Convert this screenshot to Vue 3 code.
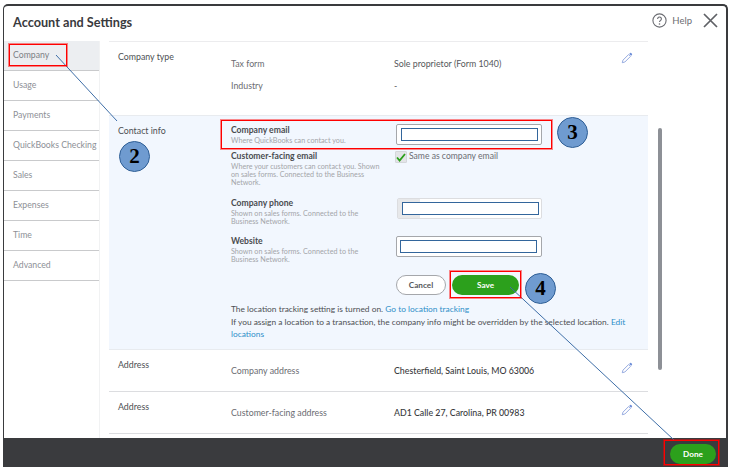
<script setup>
const tabs = ['Company','Usage','Payments','QuickBooks Checking','Sales','Expenses','Time','Advanced']
const addresses = [
  { label: 'Company address', value: 'Chesterfield, Saint Louis, MO 63006' },
  { label: 'Customer-facing address', value: 'AD1 Calle 27, Carolina, PR 00983' }
]
const pencil = 'M1.5 12.5l.8-3 6.6-6.6 2.2 2.2-6.6 6.6z'
const tip = 'M9.6 2.2l.9-.9a1 1 0 0 1 1.4 0l.8.8a1 1 0 0 1 0 1.4l-.9.9z'
</script>

<template>
  <div class="page">
    <div class="window">
      <header class="top">
        <h1>Account and Settings</h1>
        <div class="tools">
          <svg class="help-icon" width="15" height="15" viewBox="0 0 15 15"><circle cx="7.5" cy="7.5" r="6.6" fill="none" stroke="#6b6c72" stroke-width="1.1"/><path d="M5.6 5.9a1.9 1.9 0 1 1 2.9 1.6c-.7.4-1 .8-1 1.6" fill="none" stroke="#6b6c72" stroke-width="1.1"/><circle cx="7.5" cy="11" r=".8" fill="#6b6c72"/></svg>
          <span class="help">Help</span>
          <svg class="close" width="15" height="15" viewBox="0 0 15 15"><path d="M1 1l13 13M14 1L1 14" stroke="#5f6166" stroke-width="1.7" fill="none"/></svg>
        </div>
      </header>
      <div class="body">
        <nav class="side">
          <div v-for="(t, i) in tabs" :key="t" class="tab" :class="{ active: i === 0 }">{{ t }}</div>
        </nav>
        <main class="content">
          <section class="row type">
            <div class="label">Company type</div>
            <div class="pairs">
              <div class="pair"><span>Tax form</span><span class="val">Sole proprietor (Form 1040)</span></div>
              <div class="pair"><span>Industry</span><span class="val">-</span></div>
            </div>
            <svg class="pen" width="12" height="12" viewBox="0 0 14 14"><path :d="pencil" fill="none" stroke="#8fa6de" stroke-width="1.1"/><path :d="tip" fill="#6f8fd8"/></svg>
          </section>
          <section class="row contact">
            <div class="label">Contact info</div>
            <div class="form">
              <div class="field first">
                <div class="desc"><b>Company email</b><small>Where QuickBooks can contact you.</small></div>
                <div class="box"><i class="mask"></i></div>
              </div>
              <div class="field second">
                <div class="desc"><b>Customer-facing email</b><small>Where your customers can contact you. Shown on sales forms. Connected to the Business Network.</small></div>
                <label class="same">
                  <span class="check"><svg width="10" height="9" viewBox="0 0 10 9"><path d="M1 4.5l2.6 3L9 1" fill="none" stroke="#2ca01c" stroke-width="1.8"/></svg></span>
                  Same as company email
                </label>
              </div>
              <div class="field third">
                <div class="desc"><b>Company phone</b><small>Shown on sales forms. Connected to the Business Network.</small></div>
                <div class="box phone"><span class="flag"></span><i class="mask"></i></div>
              </div>
              <div class="field fourth">
                <div class="desc"><b>Website</b><small>Shown on sales forms. Connected to the Business Network.</small></div>
                <div class="box"><i class="mask"></i></div>
              </div>
              <div class="actions">
                <button class="cancel">Cancel</button>
                <button class="save">Save</button>
              </div>
              <p class="note">The location tracking setting is turned on. <a>Go to location tracking</a></p>
              <p class="note">If you assign a location to a transaction, the company info might be overridden by the selected location. <a>Edit</a> <a>locations</a></p>
            </div>
          </section>
          <section v-for="a in addresses" :key="a.label" class="row address">
            <div class="label">Address</div>
            <div class="pair addr"><span>{{ a.label }}</span><span class="val strong">{{ a.value }}</span></div>
            <svg class="pen" width="12" height="12" viewBox="0 0 14 14"><path :d="pencil" fill="none" stroke="#8fa6de" stroke-width="1.1"/><path :d="tip" fill="#6f8fd8"/></svg>
          </section>
        </main>
        <div class="rail"><div class="thumb"></div></div>
      </div>
      <footer class="foot"><button class="done">Done</button></footer>
    </div>

    <svg class="lines" width="729" height="467" viewBox="0 0 729 467">
      <path d="M56 55L117 121M510 287L674 440" stroke="#3f6fa8" stroke-width="1" fill="none"/>
    </svg>
    <div class="mark m1"></div>
    <div class="mark m2"></div>
    <div class="mark m3"></div>
    <div class="mark m4"></div>
    <div class="step s2">2</div>
    <div class="step s3">3</div>
    <div class="step s4">4</div>
  </div>
</template>

<style scoped>
.page { position: relative; width: 729px; height: 467px; overflow: hidden; background: #fff; font-family: "Lato", "Open Sans", sans-serif; color: #393a3d; }
.window { display: flex; flex-direction: column; box-sizing: border-box; width: 725px; height: 463px; margin: 4px 0 0 3px; border-top: 2px solid #3a3b3e; border-left: 1px solid #3a3b3e; border-right: 2px solid #3a3b3e; border-radius: 5px 5px 0 0; background: #fff; overflow: hidden; }
.top { height: 35px; flex: none; display: flex; justify-content: space-between; padding: 0 8px 0 9px; box-sizing: border-box; }
h1 { margin: 9px 0 0; font-size: 12.7px; line-height: 15px; font-weight: 700; color: #393a3d; }
.tools { display: flex; align-items: center; height: 15px; margin-top: 7px; }
.help { font-size: 9.5px; color: #6b6c72; margin: 0 11px 0 5px; }
.close { display: block; }
.body { flex: 1; min-height: 0; display: flex; }
.side { width: 96px; flex: none; box-sizing: border-box; border-right: 1px solid #f1f2f3; }
.tab { height: 30px; box-sizing: border-box; padding: 8px 0 0 9px; border-bottom: 1px solid #c9cacc; font-size: 8.7px; color: #8d9096; white-space: nowrap; }
.tab.active { background: #eceef1; color: #7c7f85; }
.content { width: 539px; flex: none; margin-left: 9px; overflow: hidden; border-top: 1px solid #ececee; }
.row { position: relative; display: flex; box-sizing: border-box; padding-left: 9px; }
.label { width: 113px; flex: none; font-size: 8.8px; color: #4d4f53; }
.type { height: 73px; padding-top: 9px; }
.pairs { padding-top: 7px; }
.pair { display: flex; font-size: 8.8px; color: #6b6c72; height: 22px; align-items: flex-start; }
.pair span:first-child { width: 163px; }
.val { color: #55575b; }
.strong { color: #393a3d; font-weight: 500; }
.pen { position: absolute; left: 512px; top: 10px; }
.address .pen { top: 12px; }
.contact { height: 235px; padding-top: 9px; background: #f2f7fe; border-top: 1px solid #e8ebef; border-bottom: 1px solid #e8ebef; }
.form { width: 404px; font-size: 8.6px; position: relative; }
.field { display: flex; justify-content: space-between; position: relative; width: 311px; }
.desc { width: 150px; display: flex; flex-direction: column; }
.desc b { font-size: 8.6px; font-weight: 700; color: #4a4c50; line-height: 10px; }
.desc small { font-size: 7.2px; color: #a3a5a9; line-height: 7.8px; margin-top: 2px; }
.first { height: 26px; }
.second { height: 47px; }
.third { height: 38px; }
.fourth { height: 38px; }
.box { box-sizing: border-box; width: 146px; height: 21px; background: #fff; border: 1px solid #a5a7ab; border-radius: 2px; padding: 3px 4px; }
.first .box { margin-top: -1px; }
.third .box { width: 145px; border-color: #dcdde0; display: flex; padding: 3px 4px 3px 0; }
.fourth .box { padding-left: 3px; }
.flag { flex: none; width: 22px; height: 19px; margin: -3px -22px 0 0; background: #e7e8ea; }
.mask { display: block; flex: none; width: 137px; height: 13px; box-sizing: border-box; background: #fff; border: 1px solid #33669c; }
.third .mask { position: relative; margin-left: 4px; }
.same { display: flex; align-items: flex-start; width: 147px; gap: 2px; font-size: 8.6px; line-height: 11px; color: #6b6c72; }
.check { box-sizing: border-box; width: 12px; height: 12px; display: flex; align-items: center; justify-content: center; background: #e3e4e7; border: 1px solid #d4d7db; border-radius: 1px; flex: none; }
.actions { display: flex; width: 311px; box-sizing: border-box; justify-content: flex-end; gap: 6px; padding-right: 23px; margin-top: 1px; }
button { font-family: inherit; border-radius: 10px; height: 20px; padding: 0; font-size: 8.2px; font-weight: 700; cursor: pointer; }
.cancel { width: 50px; background: #fff; border: 1px solid #a5a7ab; color: #55575b; }
.save { width: 67px; background: #2ca01c; border: 0; color: #fff; }
.note { margin: 0; font-size: 8.4px; line-height: 12.5px; color: #4d4f53; }
.actions + .note { margin-top: 8px; }
a { color: #2e8fc9; }
.address { height: 42px; padding-top: 9px; border-bottom: 1px solid #dcdde0; }
.addr { padding-top: 6px; }
.rail { margin-left: 10px; padding-top: 87px; }
.thumb { width: 4px; height: 242px; background: #8d9096; border-radius: 2px; }
.foot { height: 29px; flex: none; background: #3a3b3e; display: flex; justify-content: flex-end; align-items: center; padding-right: 10px; }
.done { width: 46px; height: 20px; background: #2ca01c; border: 0; color: #fff; margin-top: 2px; }
.lines { position: absolute; left: 0; top: 0; }
.mark { position: absolute; box-sizing: border-box; border: 1px solid #ff0000; box-shadow: 0 0 0 1px rgba(255, 0, 0, .45); }
.m1 { left: 9px; top: 44px; width: 58px; height: 22px; }
.m2 { left: 221px; top: 120px; width: 331px; height: 29px; }
.m3 { left: 450px; top: 271px; width: 71px; height: 27px; }
.m4 { left: 664px; top: 440px; width: 55px; height: 25px; }
.step { position: absolute; box-sizing: border-box; width: 31px; height: 31px; border-radius: 50%; background: #6f9bd0; border: 1px solid #2f5f96; color: #000; font: 700 21px/29px "Liberation Serif", serif; text-align: center; }
.s2 { left: 119px; top: 141px; }
.s3 { left: 557px; top: 117px; }
.s4 { left: 525px; top: 273px; }
</style>

<style>
html, body { margin: 0; background: #fff; }
</style>
